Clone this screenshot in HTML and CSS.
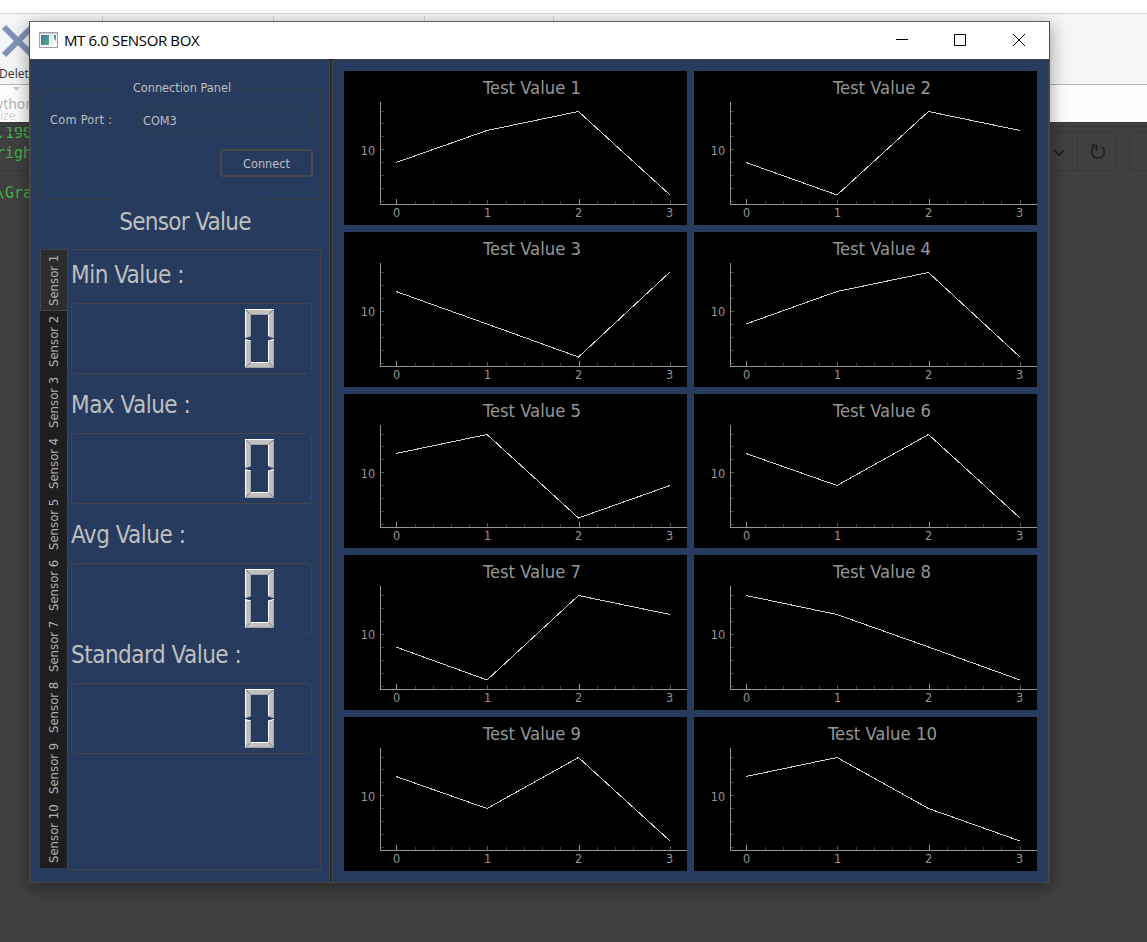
FILE: index.html
```html
<!DOCTYPE html>
<html lang="en">
<head>
<meta charset="utf-8">
<title>MT 6.0 SENSOR BOX</title>
<link rel="stylesheet" href="styles.css">
</head>
<body>
<svg class="defs" width="0" height="0">
  <defs>
    <g id="xticks">
      <path d="M71.500 130v3M89.500 130v3M107.500 130v3M125.500 130v3M162.500 130v3M180.500 130v3M198.500 130v3M216.500 130v3M253.500 130v3M271.500 130v3M289.500 130v3M307.500 130v3" class="tick-minor"/>
      <path d="M143.500 129v4M326.500 129v4" class="tick-mid"/>
      <path d="M52.500 128v5M235.500 128v5M36 133.500H343" class="axis-line"/>
      <text x="52.500" y="146" class="num">0</text><text x="143.500" y="146" class="num">1</text><text x="234.500" y="146" class="num">2</text><text x="325.500" y="146" class="num">3</text>
    </g>
    <g id="axes">
      <path d="M37 40.500h3M37 52.500h3M37 65.500h3M37 91.500h3M37 104.500h3M37 117.500h3M37 130.500h3" class="tick-minor"/>
      <path d="M37 78.500h3" class="tick-mid"/>
      <path d="M36.500 31V133" class="axis-line"/>
      <text x="24" y="84" class="num">10</text>
      <use href="#xticks"/>
    </g>
    <g id="axes-tall">
      <path d="M37 40.500h3M37 53.500h3M37 66.500h3M37 92.500h3M37 105.500h3M37 118.500h3M37 131.500h3" class="tick-minor"/>
      <path d="M37 79.500h3" class="tick-mid"/>
      <path d="M36.500 31V134" class="axis-line"/>
      <text x="24" y="84" class="num">10</text>
      <use href="#xticks" y="1"/>
    </g>
    <g id="zero">
      <path d="M0 0H29L23 6H6Z" fill="#c0c0c0"/>
      <path d="M0 0L6 6V27L0 29Z" fill="#c0c0c0"/>
      <path d="M29 0V29L23 27V6Z" fill="#c0c0c0"/>
      <path d="M0 30L6 32V53L0 59Z" fill="#c0c0c0"/>
      <path d="M29 30V59L23 53V32Z" fill="#c0c0c0"/>
      <path d="M0 59L6 53H23L29 59Z" fill="#c0c0c0"/>
      <path d="M0 .5H29M.5 0V29M.5 30V58M23.500 5V27M23.500 32V53M5 53.500H24M0 30.500L6 32M23 32L29 30.500" stroke="#fff" fill="none"/>
      <path d="M6 5.500H23M5.500 6V27M5.500 32V53M28.500 1V29M28.500 31V58M1 58.500H29M0 29L6 27M23 27L29 29" stroke="#a2a2a2" fill="none"/>
      <path d="M1 1L6 6M28 1L23 6M1 58L6 53M23 53L28 58" stroke="#777" stroke-width=".7" fill="none"/>
    </g>
  </defs>
</svg>
<div class="desktop">
  <div class="menu-strip"></div>
  <div class="ribbon">
    <svg class="delete-icon" width="32" height="34" viewBox="0 0 32 34"><path d="M4 3L32 31M32 3L4 31" stroke="#8093b8" stroke-width="6"/></svg>
    <span class="delete-label">Delet</span>
    <i class="sep sep-a"></i><i class="sep sep-b"></i><i class="sep sep-c"></i><i class="sep sep-d"></i>
  </div>
  <div class="page-strip">
    <svg width="8" height="5" viewBox="0 0 8 5" class="caret"><path d="M0 0H7L3.500 4Z" fill="#c8c8c8"/></svg>
    <div class="word-python">ython</div>
    <div class="word-size">ize</div>
  </div>
  <div class="editor">
    <div class="code code-a">.190</div>
    <div class="code code-b">righ</div>
    <div class="code code-c">\Gra</div>
    <svg class="rules" width="30" height="50" viewBox="0 0 30 50"><path d="M0 4.500H30M0 10.500H30M0 48.500H30" stroke="#383838"/></svg>
    <svg class="toolbar" width="98" height="50" viewBox="0 0 98 50"><path d="M0 4.500H98M0 10.500H67.500V48.500H0M28.500 10V48M98 10.500H80.500V48.500H98" stroke="#383838" fill="none"/><path d="M5 28L10 33L15 28" stroke="#222" stroke-width="2" fill="none"/><path d="M53 25A6.300 6.300 0 1 1 45 25M42.500 23.500H47.500V29" stroke="#222" stroke-width="1.800" fill="none"/></svg>
  </div>
</div>

<main class="window">
  <header class="titlebar">
    <svg class="app-icon" width="19" height="16" viewBox="0 0 19 16"><defs><linearGradient id="g" x2="1" y2="1"><stop stop-color="#3d6fae"/><stop offset="1" stop-color="#55b06f"/></linearGradient></defs><path d="M.5.500H18.500V15.500H.5Z" fill="#f8f8f8" stroke="#9aa0a8"/><path d="M1 1.500H18" stroke="#c8ccd2"/><path d="M2 3H10V13H2Z" fill="url(#g)"/><path d="M11 3H14V13H11Z" fill="#e8ecef"/><path d="M15 3H17V9L15 6Z" fill="#4a9a90"/></svg>
    <h1>MT 6.0 SENSOR BOX</h1>
    <svg class="controls" width="132" height="14" viewBox="0 0 132 14"><path d="M0 6.500H12M58.500 1.500H69.500V12.500H58.500ZM117 1L129 13M129 1L117 13" stroke="#000" fill="none"/></svg>
  </header>
  <div class="client">
    <section class="side">
      <div class="connection">
        <svg class="group-frame" width="281" height="111" viewBox="0 0 281 111"><path d="M80 .5H.5V110.500H71M204 .5H280.500V110.500H221" stroke="#363c46" fill="none"/></svg>
        <div class="group-title">Connection Panel</div>
        <div class="port-row"><label>Com Port :</label><div class="port">COM3</div></div>
        <button class="connect">Connect</button>
      </div>
      <h2>Sensor Value</h2>
      <div class="sensor">
        <nav class="tabs">
          <span class="tab active">Sensor 1</span><span class="tab">Sensor 2</span><span class="tab">Sensor 3</span><span class="tab">Sensor 4</span><span class="tab">Sensor 5</span><span class="tab">Sensor 6</span><span class="tab">Sensor 7</span><span class="tab">Sensor 8</span><span class="tab">Sensor 9</span><span class="tab last">Sensor 10</span>
        </nav>
        <div class="readings">
          <h3>Min Value :</h3>
          <div class="lcd"><svg width="29" height="59"><use href="#zero"/></svg></div>
          <h3>Max Value :</h3>
          <div class="lcd"><svg width="29" height="59"><use href="#zero"/></svg></div>
          <h3>Avg Value :</h3>
          <div class="lcd cut"><svg width="29" height="59"><use href="#zero"/></svg></div>
          <h3>Standard Value :</h3>
          <div class="lcd"><svg width="29" height="59"><use href="#zero"/></svg></div>
        </div>
      </div>
    </section>
    <section class="plots">
      <svg class="plot"><use href="#axes"/><text x="188" y="23" textLength="98" lengthAdjust="spacingAndGlyphs" class="title">Test Value 1</text><path class="line" d="M52 91.500L143 59.500L234.500 40.500L326 124"/></svg>
      <svg class="plot"><use href="#axes"/><text x="188" y="23" textLength="98" lengthAdjust="spacingAndGlyphs" class="title">Test Value 2</text><path class="line" d="M52 91.500L143 124L234.500 40.500L326 59.500"/></svg>
      <svg class="plot"><use href="#axes-tall"/><text x="188" y="23" textLength="98" lengthAdjust="spacingAndGlyphs" class="title">Test Value 3</text><path class="line" d="M52 59.500L143 92L234.500 125L326 40"/></svg>
      <svg class="plot"><use href="#axes-tall"/><text x="188" y="23" textLength="98" lengthAdjust="spacingAndGlyphs" class="title">Test Value 4</text><path class="line" d="M52 92L143 59.500L234.500 40.500L326 125"/></svg>
      <svg class="plot"><use href="#axes"/><text x="188" y="23" textLength="98" lengthAdjust="spacingAndGlyphs" class="title">Test Value 5</text><path class="line" d="M52 59.500L143 40.500L234.500 124L326 91.500"/></svg>
      <svg class="plot"><use href="#axes"/><text x="188" y="23" textLength="98" lengthAdjust="spacingAndGlyphs" class="title">Test Value 6</text><path class="line" d="M52 59.500L143 91.500L234.500 40.500L326 124"/></svg>
      <svg class="plot"><use href="#axes-tall"/><text x="188" y="23" textLength="98" lengthAdjust="spacingAndGlyphs" class="title">Test Value 7</text><path class="line" d="M52 92L143 125L234.500 40.500L326 59.500"/></svg>
      <svg class="plot"><use href="#axes-tall"/><text x="188" y="23" textLength="98" lengthAdjust="spacingAndGlyphs" class="title">Test Value 8</text><path class="line" d="M52 40.500L143 59.500L234.500 92L326 125"/></svg>
      <svg class="plot"><use href="#axes"/><text x="188" y="23" textLength="98" lengthAdjust="spacingAndGlyphs" class="title">Test Value 9</text><path class="line" d="M52 59.500L143 91.500L234.500 40.500L326 124"/></svg>
      <svg class="plot"><use href="#axes"/><text x="188.500" y="23" textLength="109" lengthAdjust="spacingAndGlyphs" class="title">Test Value 10</text><path class="line" d="M52 59.500L143 40.500L234.500 91.500L326 124"/></svg>
    </section>
  </div>
</main>
</body>
</html>
```
FILE: styles.css
```css
* { box-sizing: border-box; }
body { margin: 0; width: 1147px; height: 942px; overflow: hidden; position: relative; background: #404040; font-family: "DejaVu Sans Condensed", "DejaVu Sans", sans-serif; font-stretch: condensed; }
h1, h2, h3 { margin: 0; font-weight: 400; }
.defs { position: absolute; }

.desktop { height: 942px; }
.menu-strip { height: 14px; background: #fff; border-bottom: 1px solid #d6d6d6; }
.ribbon { position: relative; height: 71px; background: #f4f5f7; border-bottom: 1px solid #b5b5ba; overflow: hidden; padding-top: 10px; }
.delete-icon { display: block; }
.delete-label { display: block; margin-top: 7px; margin-left: -1px; font: 12px/18px "Open Sans", sans-serif; letter-spacing: .1px; color: #333; }
.sep { position: absolute; top: 2px; width: 1px; height: 60px; background: #d0d2d5; }
.sep-a { left: 102px; }
.sep-b { left: 273px; }
.sep-c { left: 424px; }
.sep-d { left: 553px; }
.page-strip { height: 37px; background: #fdfdfd; padding-top: 2px; }
.caret { display: block; margin-left: 13px; }
.word-python { margin: 5px 0 0 -4px; font: 14px/14px "Noto Sans", sans-serif; color: #b5b5b5; }
.word-size { margin-top: -2px; font: 12px/13px "Noto Sans", sans-serif; color: #d3d3d3; }
.editor { position: relative; height: 820px; background: #404040; border-top: 1px solid #383838; }
.code { height: 20px; font: 15px/20px "DejaVu Sans Mono", monospace; color: #45b34a; margin-left: -4px; }
.code-c { margin-top: 20px; }
.rules { position: absolute; left: 0; top: -1px; }
.toolbar { position: absolute; right: 0; top: -1px; }

.window { position: absolute; left: 29px; top: 21px; width: 1021px; height: 862px; border: 1px solid #606060; border-color: #606060 #4c4a47 #4c4a47; box-shadow: 0 5px 16px 1px rgba(0,0,0,.36); background: #2a2b2d; }
.titlebar { height: 37px; background: #fff; display: flex; align-items: center; padding: 0 21px 2px 9px; }
.app-icon { margin-top: 1px; }
.titlebar h1 { margin-left: 6px; font: 15px/20px "Open Sans", sans-serif; letter-spacing: -.37px; color: #000; }
.controls { margin-left: auto; }
.client { display: grid; grid-template-columns: 300px 717px; gap: 2px; height: 823px; }
.side, .plots { background: #273b5e; border: 1px solid #454545; border-radius: 3px; }
.side { padding: 29px 9px 0; color: #bfbfbf; }

.connection { position: relative; height: 111px; padding-top: 1px; font-size: 12.6px; }
.group-frame { position: absolute; left: 0; top: 0; }
.group-title { height: 14px; margin-top: -9px; line-height: 14px; text-align: center; padding-left: 4px; }
.port-row { display: flex; align-items: center; height: 22px; margin: 14px 9px 0 10px; }
.port-row label { width: 90px; padding-bottom: 2px; letter-spacing: .3px; }
.port { flex: 1; height: 22px; padding-left: 2px; line-height: 21px; border: 1px solid #353c47; border-radius: 2px; }
.connect { display: block; width: 93px; height: 28px; margin: 18px 7px 0 auto; padding: 0; border: 2px solid #4a4a4a; border-radius: 3px; background: transparent; color: #bfbfbf; font: inherit; }
.side h2 { margin-top: 5px; height: 35px; line-height: 34px; font-size: 24px; letter-spacing: -.7px; text-align: center; padding-left: 10px; }

.sensor { display: grid; grid-template-columns: 27px 254px; margin-top: 9px; height: 621px; }
.tabs { display: flex; flex-direction: column; height: 619px; padding-top: 1px; background: #1e1e1e; }
.tab { height: 61px; writing-mode: vertical-rl; transform: rotate(180deg); font-size: 13px; line-height: 27px; text-align: center; color: #b1b1b1; }
.tab.last { height: 69px; }
.tab.active { height: 62px; margin-top: -1px; background: #2d2d2d; border: 1px solid #444; border-left: 0; line-height: 25px; }
.readings { border: 1px solid #444549; border-radius: 3px; padding: 6px 8px 0 3px; }
.readings h3 { height: 40px; line-height: 39px; font-size: 24px; letter-spacing: -.5px; }
.readings h3 + .lcd { margin-top: 7px; }
.lcd { height: 71px; margin-bottom: 12px; padding: 5px 0 0 173px; border: 1px solid #434549; border-radius: 3px; }
.lcd svg { display: block; }
.lcd.cut { margin-bottom: 2px; border-bottom-color: transparent; background: linear-gradient(#434549, #434549) 100% 100% / 9px 1px no-repeat border-box; }

.plots { display: grid; grid-template-columns: 343px 343px; grid-template-rows: 154px 155px 154px 155px 154px; gap: 7px; padding: 11px; }
.plot { width: 343px; height: 100%; background: #000; }
.title { fill: #969696; font-size: 17.5px; text-anchor: middle; }
.num { fill: #969696; font-size: 12.6px; text-anchor: middle; }
.line { fill: none; stroke: #d0d0d0; stroke-width: 1; shape-rendering: crispEdges; }
.axis-line { stroke: #969696; fill: none; }
.tick-mid { stroke: #555; }
.tick-minor { stroke: #3c3c3c; }
```
